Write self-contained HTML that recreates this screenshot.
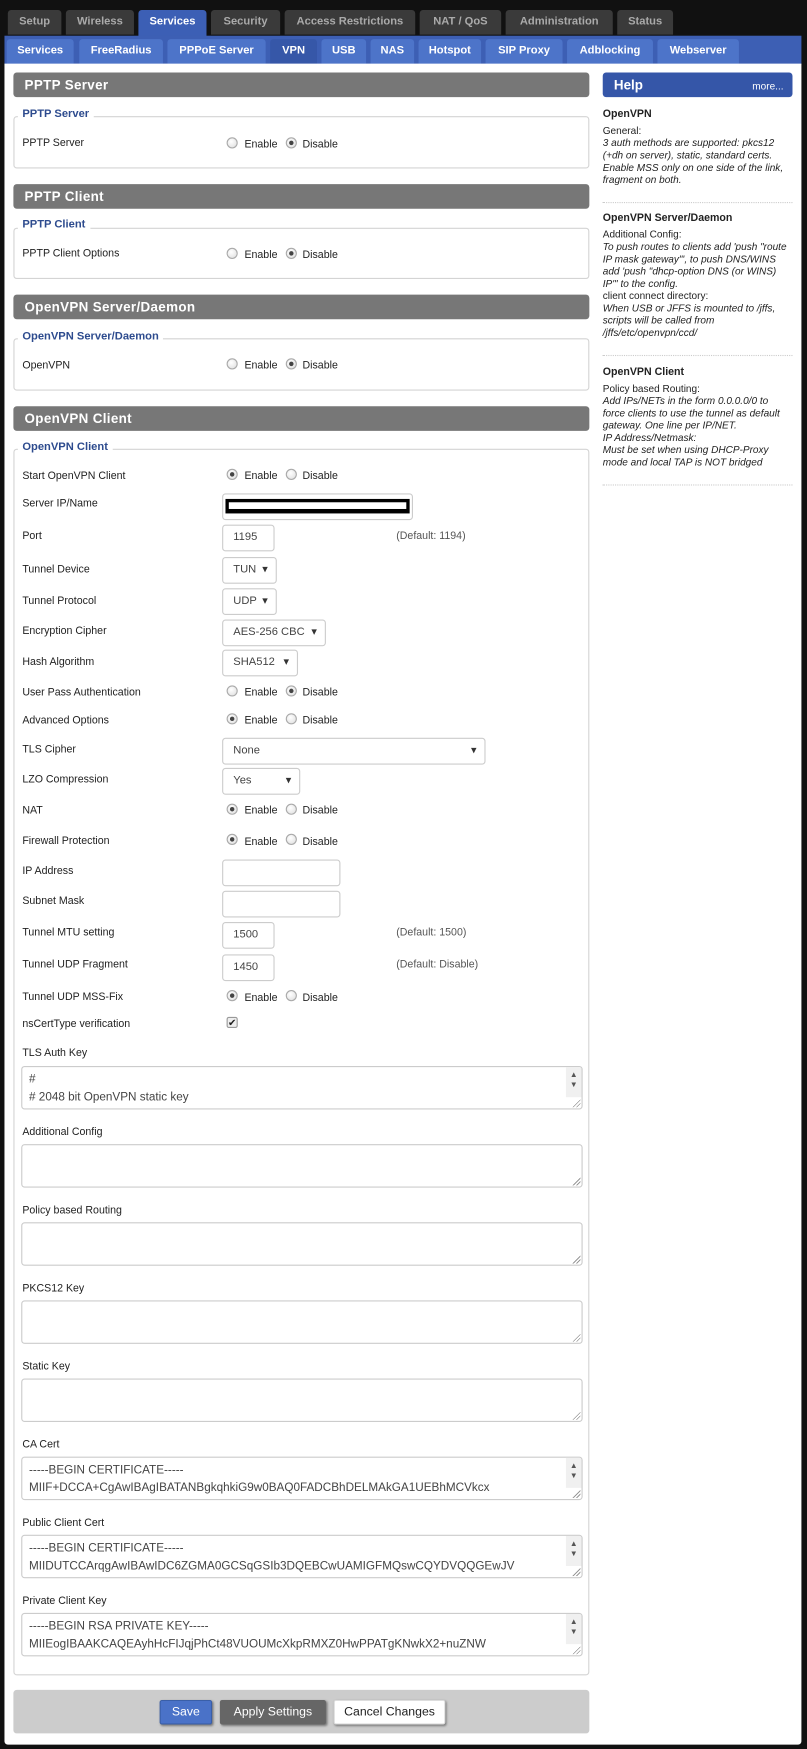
<!DOCTYPE html>
<html><head><meta charset="utf-8">
<style>
html,body{margin:0;padding:0;background:#111;width:807px;height:1749px;overflow:hidden}
#w{position:absolute;left:0;top:0;width:723px;height:1567px;transform:scale(1.11618);transform-origin:0 0;font-family:"Liberation Sans",sans-serif;font-size:9.5px;color:#222}
div,span{position:absolute;box-sizing:border-box}
.tab{top:9px;height:22px;background:#3a3a3a;color:#aaa;font-weight:bold;font-size:10px;text-align:center;line-height:21px;border-radius:3px 3px 0 0}
.tab.a{background:#3c5fb5;color:#fff;height:25px}
.bar{left:4px;top:32px;width:714px;height:26px;background:#3d5fb4}
.st{top:35px;height:22px;background:#4d74c9;color:#fff;font-weight:bold;font-size:10px;text-align:center;line-height:22px;border-radius:3px 3px 0 0}
.st.a{background:#3657a8}
.main{left:4px;top:57px;width:714px;height:1506px;background:#fff;border-radius:0 0 3px 3px}
.hd{left:12px;width:516px;height:22px;background:#777;border-radius:3px;color:#fff;font-weight:bold;font-size:12px;line-height:22px;padding-left:10px;letter-spacing:.3px}
.fs{left:12px;width:516px;border:1px solid #d4d4d4;border-radius:3px}
.lg{left:16px;background:#fff;color:#2d4b8e;font-weight:bold;font-size:10px;padding:0 4px;line-height:12px}
.l{left:20px;line-height:12px;font-size:9.5px}
.rd{width:10px;height:10px;border-radius:50%;border:1px solid #aaa;background:radial-gradient(circle at 40% 35%,#fff,#ddd)}
.rd.c::after{content:"";position:absolute;left:2px;top:2px;width:4px;height:4px;border-radius:50%;background:#444}
.in{left:199px;height:24px;border:1px solid #ccc;border-radius:3px;background:#fff;font-size:10px;color:#444;line-height:22px;padding-left:9px}
.ar::after{content:"\25BE";position:absolute;right:7px;top:0;font-size:10px;color:#333}
.df{left:355px;color:#555;font-size:9.5px;line-height:12px}
.ta{left:19px;width:503px;height:39px;border:1px solid #ccc;border-radius:3px;background:#fff;font-size:10.5px;color:#444;line-height:16px;padding:3px 0 0 6px;overflow:hidden;white-space:nowrap}
.grip{right:1px;bottom:1px;width:8px;height:8px;background:linear-gradient(135deg,transparent 55%,#999 55%,#999 62%,transparent 62%,transparent 75%,#999 75%,#999 82%,transparent 82%)}
.sb{right:0;top:0;width:14px;height:27px;background:#f0f0f0;font-size:7px;color:#555;text-align:center;line-height:9px;padding-top:3px}
.hp{left:540px;width:170px;font-size:9px;line-height:11px;color:#222}
.hp b{font-size:9.5px}
.hp i{display:block}
.dot{left:540px;width:170px;border-top:1px dotted #ccc;height:0}
</style></head><body><div id="w">
<div class="tab" style="left:7px;width:48px">Setup</div>
<div class="tab" style="left:59px;width:61px">Wireless</div>
<div class="tab a" style="left:124px;width:61px">Services</div>
<div class="tab" style="left:189px;width:62px">Security</div>
<div class="tab" style="left:255px;width:117px">Access Restrictions</div>
<div class="tab" style="left:376px;width:73px">NAT / QoS</div>
<div class="tab" style="left:453px;width:96px">Administration</div>
<div class="tab" style="left:553px;width:50px">Status</div>
<div class="bar"></div>
<div class="st" style="left:6px;width:60px">Services</div>
<div class="st" style="left:71px;width:75px">FreeRadius</div>
<div class="st" style="left:150px;width:88px">PPPoE Server</div>
<div class="st a" style="left:242px;width:42px">VPN</div>
<div class="st" style="left:288px;width:40px">USB</div>
<div class="st" style="left:332px;width:39px">NAS</div>
<div class="st" style="left:375px;width:56px">Hotspot</div>
<div class="st" style="left:435px;width:69px">SIP Proxy</div>
<div class="st" style="left:508px;width:77px">Adblocking</div>
<div class="st" style="left:589px;width:73px">Webserver</div>
<div class="main"></div>

<div class="hd" style="top:65px">PPTP Server</div>
<div class="fs" style="top:104px;height:47px"></div><div class="lg" style="top:97px">PPTP Server</div>
<div class="l" style="top:123px">PPTP Server</div>
<span class="rd" style="left:203px;top:123px"></span><span class="l" style="left:219px;top:124px">Enable</span><span class="rd c" style="left:256px;top:123px"></span><span class="l" style="left:271px;top:124px">Disable</span>

<div class="hd" style="top:165px">PPTP Client</div>
<div class="fs" style="top:204px;height:46px"></div><div class="lg" style="top:196px">PPTP Client</div>
<div class="l" style="top:222px">PPTP Client Options</div>
<span class="rd" style="left:203px;top:222px"></span><span class="l" style="left:219px;top:223px">Enable</span><span class="rd c" style="left:256px;top:222px"></span><span class="l" style="left:271px;top:223px">Disable</span>

<div class="hd" style="top:264px">OpenVPN Server/Daemon</div>
<div class="fs" style="top:303px;height:47px"></div><div class="lg" style="top:296px">OpenVPN Server/Daemon</div>
<div class="l" style="top:322px">OpenVPN</div>
<span class="rd" style="left:203px;top:321px"></span><span class="l" style="left:219px;top:322px">Enable</span><span class="rd c" style="left:256px;top:321px"></span><span class="l" style="left:271px;top:322px">Disable</span>

<div class="hd" style="top:364px">OpenVPN Client</div>
<div class="fs" style="top:402px;height:1099px"></div><div class="lg" style="top:395px">OpenVPN Client</div>

<div class="l" style="top:421px">Start OpenVPN Client</div>
<span class="rd c" style="left:203px;top:420px"></span><span class="l" style="left:219px;top:421px">Enable</span><span class="rd" style="left:256px;top:420px"></span><span class="l" style="left:271px;top:421px">Disable</span>

<div class="l" style="top:446px">Server IP/Name</div>
<div class="in" style="top:442px;width:171px;padding:0"><span style="left:2px;top:4px;width:165px;height:13px;background:#000"></span><span style="left:5px;top:7px;width:159px;height:6px;background:#fff"></span></div>

<div class="l" style="top:475px">Port</div>
<div class="in" style="top:470px;width:47px">1195</div><div class="df" style="top:475px">(Default: 1194)</div>

<div class="l" style="top:505px">Tunnel Device</div>
<div class="in ar" style="top:499px;width:49px">TUN</div>
<div class="l" style="top:533px">Tunnel Protocol</div>
<div class="in ar" style="top:527px;width:49px">UDP</div>
<div class="l" style="top:560px">Encryption Cipher</div>
<div class="in ar" style="top:555px;width:93px">AES-256 CBC</div>
<div class="l" style="top:588px">Hash Algorithm</div>
<div class="in ar" style="top:582px;width:68px">SHA512</div>

<div class="l" style="top:615px">User Pass Authentication</div>
<span class="rd" style="left:203px;top:614px"></span><span class="l" style="left:219px;top:615px">Enable</span><span class="rd c" style="left:256px;top:614px"></span><span class="l" style="left:271px;top:615px">Disable</span>
<div class="l" style="top:640px">Advanced Options</div>
<span class="rd c" style="left:203px;top:639px"></span><span class="l" style="left:219px;top:640px">Enable</span><span class="rd" style="left:256px;top:639px"></span><span class="l" style="left:271px;top:640px">Disable</span>

<div class="l" style="top:666px">TLS Cipher</div>
<div class="in ar" style="top:661px;width:236px">None</div>
<div class="l" style="top:693px">LZO Compression</div>
<div class="in ar" style="top:688px;width:70px">Yes</div>

<div class="l" style="top:721px">NAT</div>
<span class="rd c" style="left:203px;top:720px"></span><span class="l" style="left:219px;top:721px">Enable</span><span class="rd" style="left:256px;top:720px"></span><span class="l" style="left:271px;top:721px">Disable</span>
<div class="l" style="top:748px">Firewall Protection</div>
<span class="rd c" style="left:203px;top:747px"></span><span class="l" style="left:219px;top:749px">Enable</span><span class="rd" style="left:256px;top:747px"></span><span class="l" style="left:271px;top:749px">Disable</span>

<div class="l" style="top:775px">IP Address</div>
<div class="in" style="top:770px;width:106px"></div>
<div class="l" style="top:802px">Subnet Mask</div>
<div class="in" style="top:798px;width:106px"></div>
<div class="l" style="top:830px">Tunnel MTU setting</div>
<div class="in" style="top:826px;width:47px">1500</div><div class="df" style="top:830px">(Default: 1500)</div>
<div class="l" style="top:859px">Tunnel UDP Fragment</div>
<div class="in" style="top:855px;width:47px">1450</div><div class="df" style="top:859px">(Default: Disable)</div>
<div class="l" style="top:888px">Tunnel UDP MSS-Fix</div>
<span class="rd c" style="left:203px;top:887px"></span><span class="l" style="left:219px;top:889px">Enable</span><span class="rd" style="left:256px;top:887px"></span><span class="l" style="left:271px;top:889px">Disable</span>
<div class="l" style="top:912px">nsCertType verification</div>
<span style="left:203px;top:911px;width:10px;height:10px;border:1px solid #999;border-radius:2px;background:#eee;font-size:9px;line-height:8px;text-align:center;color:#222">&#10004;</span>

<div class="l" style="top:938px">TLS Auth Key</div>
<div class="ta" style="top:955px">#<br># 2048 bit OpenVPN static key<span class="sb">&#9650;<br>&#9660;</span><span class="grip"></span></div>
<div class="l" style="top:1009px">Additional Config</div>
<div class="ta" style="top:1025px"><span class="grip"></span></div>
<div class="l" style="top:1079px">Policy based Routing</div>
<div class="ta" style="top:1095px"><span class="grip"></span></div>
<div class="l" style="top:1149px">PKCS12 Key</div>
<div class="ta" style="top:1165px"><span class="grip"></span></div>
<div class="l" style="top:1219px">Static Key</div>
<div class="ta" style="top:1235px"><span class="grip"></span></div>
<div class="l" style="top:1289px">CA Cert</div>
<div class="ta" style="top:1305px">-----BEGIN CERTIFICATE-----<br>MIIF+DCCA+CgAwIBAgIBATANBgkqhkiG9w0BAQ0FADCBhDELMAkGA1UEBhMCVkcx<span class="sb">&#9650;<br>&#9660;</span><span class="grip"></span></div>
<div class="l" style="top:1359px">Public Client Cert</div>
<div class="ta" style="top:1375px">-----BEGIN CERTIFICATE-----<br>MIIDUTCCArqgAwIBAwIDC6ZGMA0GCSqGSIb3DQEBCwUAMIGFMQswCQYDVQQGEwJV<span class="sb">&#9650;<br>&#9660;</span><span class="grip"></span></div>
<div class="l" style="top:1429px">Private Client Key</div>
<div class="ta" style="top:1445px">-----BEGIN RSA PRIVATE KEY-----<br>MIIEogIBAAKCAQEAyhHcFIJqjPhCt48VUOUMcXkpRMXZ0HwPPATgKNwkX2+nuZNW<span class="sb">&#9650;<br>&#9660;</span><span class="grip"></span></div>

<div style="left:12px;top:1514px;width:516px;height:39px;background:#ccc;border-radius:3px"></div>
<div style="left:143px;top:1523px;width:47px;height:22px;background:#4a72c8;color:#fff;border:1px solid #3a5fa8;border-radius:2px;text-align:center;line-height:20px;font-size:11px;box-shadow:1px 1px 2px #777">Save</div>
<div style="left:197px;top:1523px;width:95px;height:22px;background:#666;color:#fff;border-radius:2px;text-align:center;line-height:22px;font-size:11px;box-shadow:1px 1px 2px #777">Apply Settings</div>
<div style="left:299px;top:1523px;width:100px;height:22px;background:#fff;color:#222;border:1px solid #ddd;border-radius:2px;text-align:center;line-height:20px;font-size:11px;box-shadow:1px 1px 2px #777">Cancel Changes</div>

<div style="left:540px;top:65px;width:170px;height:22px;background:#3556a8;border-radius:3px;color:#fff;font-weight:bold;font-size:12px;line-height:22px;padding-left:10px">Help<span style="right:8px;top:1px;font-weight:normal;font-size:9px">more...</span></div>
<div class="hp" style="top:97px"><b>OpenVPN</b><br><span style="position:static;display:block;margin-top:4px">General:</span><i>3 auth methods are supported: pkcs12 (+dh on server), static, standard certs. Enable MSS only on one side of the link, fragment on both.</i></div>
<div class="dot" style="top:181px"></div>
<div class="hp" style="top:190px"><b>OpenVPN Server/Daemon</b><br><span style="position:static;display:block;margin-top:4px">Additional Config:</span><i>To push routes to clients add 'push "route IP mask gateway"', to push DNS/WINS add 'push "dhcp-option DNS (or WINS) IP"' to the config.</i><span style="position:static;display:block">client connect directory:</span><i>When USB or JFFS is mounted to /jffs, scripts will be called from /jffs/etc/openvpn/ccd/</i></div>
<div class="dot" style="top:318px"></div>
<div class="hp" style="top:328px"><b>OpenVPN Client</b><br><span style="position:static;display:block;margin-top:4px">Policy based Routing:</span><i>Add IPs/NETs in the form 0.0.0.0/0 to force clients to use the tunnel as default gateway. One line per IP/NET.</i><i>IP Address/Netmask:</i><i>Must be set when using DHCP-Proxy mode and local TAP is NOT bridged</i></div>
<div class="dot" style="top:434px"></div>
</div></body></html>
